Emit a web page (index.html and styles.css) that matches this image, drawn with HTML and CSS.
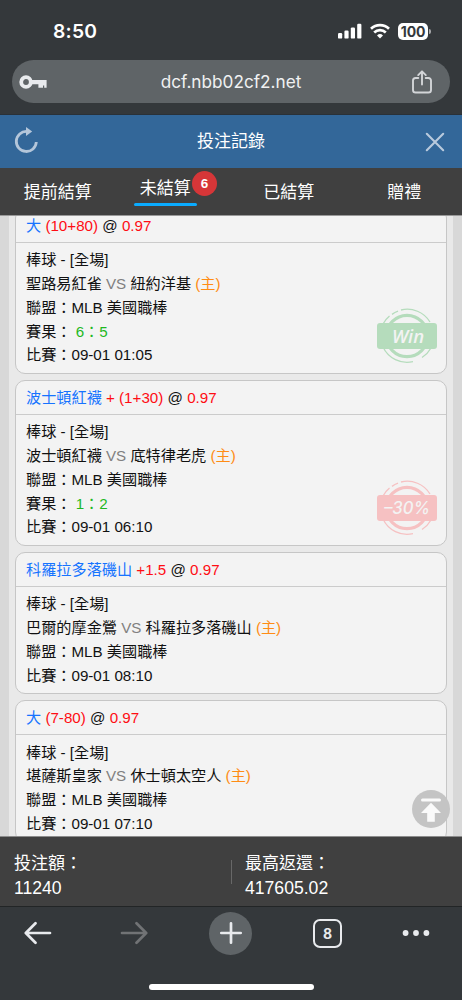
FILE: index.html
```html
<!DOCTYPE html>
<html lang="zh-TW">
<head>
<meta charset="utf-8">
<meta name="viewport" content="width=device-width, initial-scale=1">
<title>投注記錄</title>
<link rel="stylesheet" href="styles.css">
</head>
<body>
<div class="screen">
  <header class="browser-top">
    <div class="status">
      <span class="clock">8:50</span>
      <div class="status-icons">
        <svg class="signal" width="24" height="16" viewBox="0 0 24 16" fill="#fff"><rect x="0" y="10" width="4.2" height="5.6" rx="1.2"/><rect x="6.4" y="7.6" width="4.2" height="8" rx="1.2"/><rect x="12.8" y="4.4" width="4.2" height="11.2" rx="1.2"/><rect x="19.2" y=".8" width="4.2" height="14.8" rx="1.2"/></svg>
        <svg class="wifi" width="20" height="16" viewBox="0 0 20 16" fill="none" stroke="#fff" stroke-width="2.700"><path d="M1 5.700a13 13 0 0 1 18 0"/><path d="M4.200 9.400a8.400 8.400 0 0 1 11.600 0"/><path d="M10 15.500l-3-3a4.400 4.400 0 0 1 6 0z" fill="#fff" stroke="none"/></svg>
        <span class="battery">100</span><i class="battery-tip"></i>
      </div>
    </div>
    <div class="address">
      <svg width="28" height="16" viewBox="0 0 28 16"><circle cx="7" cy="8" r="4.8" fill="none" stroke="#e8eaed" stroke-width="3.8"/><path d="M12 6h15.600v7.800h-2.400v-2.300h-1.200v2.300h-4.600v-3.600H12z" fill="#e8eaed"/></svg>
      <span class="url">dcf.nbb02cf2.net</span>
      <svg width="22" height="26" viewBox="0 0 22 26" fill="none" stroke="#d3d5d8" stroke-width="1.9" stroke-linecap="round" stroke-linejoin="round"><path d="M7.300 9H4.600a2.600 2.600 0 0 0-2.600 2.600v9.300a2.600 2.600 0 0 0 2.600 2.600h12.800a2.600 2.600 0 0 0 2.600-2.600v-9.300A2.600 2.600 0 0 0 17.400 9h-2.700"/><path d="M11 15.500V2.500M7.200 6.100 11 2.300l3.800 3.800"/></svg>
    </div>
  </header>

  <div class="title-bar">
    <svg class="refresh" width="26" height="28" viewBox="0 0 26 28"><path d="M14 4.500a10 10 0 1 0 9.300 10.500" fill="none" stroke="#b4c6da" stroke-width="2.800"/><path d="M13 0v9l6.200-4.500z" fill="#b4c6da"/></svg>
    <h1 class="title">投注記錄</h1>
    <svg width="20" height="20" viewBox="0 0 20 20" stroke="#b9cadd" stroke-width="2.100" stroke-linecap="round"><path d="M1.800 1.800l16.400 16.400M18.200 1.800 1.800 18.200"/></svg>
  </div>

  <nav class="tabs">
    <span class="tab">提前結算</span>
    <span class="tab tab-active"><span class="tab-label">未結算</span><span class="badge">6</span></span>
    <span class="tab">已結算</span>
    <span class="tab">贈禮</span>
  </nav>

  <main class="content">
    <div class="list">
      <article class="card">
        <div class="card-head"><span class="pick">大</span> <span class="odds">(10+80)</span> @ <span class="odds">0.97</span></div>
        <div class="card-body">
          <p>棒球 - [全場]</p>
          <p>聖路易紅雀 <span class="vs">VS</span> 紐約洋基 <span class="home">(主)</span></p>
          <p>聯盟：MLB 美國職棒</p>
          <p>賽果： <span class="score">6：5</span></p>
          <p>比賽：09-01 01:05</p>
        </div>
        <div class="stamp win">
          <svg width="60" height="56" viewBox="0 0 60 56" fill="none" stroke="currentColor"><circle cx="30" cy="28" r="20.700" stroke-width="3.200"/><path d="M24 2a26.500 26.500 0 0 1 29 12M15 6.400a26.500 26.500 0 0 1 6-3.200M6 16A26.500 26.500 0 0 1 12.500 8M6 39A26.500 26.500 0 0 0 36 53.600M54 40A26.500 26.500 0 0 1 45 49.500" stroke-width="1.300"/></svg>
          <span class="stamp-text">Win</span>
        </div>
      </article>
      <article class="card">
        <div class="card-head"><span class="pick">波士頓紅襪</span> <span class="odds">+ (1+30)</span> @ <span class="odds">0.97</span></div>
        <div class="card-body">
          <p>棒球 - [全場]</p>
          <p>波士頓紅襪 <span class="vs">VS</span> 底特律老虎 <span class="home">(主)</span></p>
          <p>聯盟：MLB 美國職棒</p>
          <p>賽果： <span class="score">1：2</span></p>
          <p>比賽：09-01 06:10</p>
        </div>
        <div class="stamp loss">
          <svg width="60" height="56" viewBox="0 0 60 56" fill="none" stroke="currentColor"><circle cx="30" cy="28" r="20.700" stroke-width="3.200"/><path d="M24 2a26.500 26.500 0 0 1 29 12M15 6.400a26.500 26.500 0 0 1 6-3.200M6 16A26.500 26.500 0 0 1 12.500 8M6 39A26.500 26.500 0 0 0 36 53.600M54 40A26.500 26.500 0 0 1 45 49.500" stroke-width="1.300"/></svg>
          <span class="stamp-text">–30%</span>
        </div>
      </article>
      <article class="card">
        <div class="card-head"><span class="pick">科羅拉多落磯山</span> <span class="odds">+1.5</span> @ <span class="odds">0.97</span></div>
        <div class="card-body">
          <p>棒球 - [全場]</p>
          <p>巴爾的摩金鶯 <span class="vs">VS</span> 科羅拉多落磯山 <span class="home">(主)</span></p>
          <p>聯盟：MLB 美國職棒</p>
          <p>比賽：09-01 08:10</p>
        </div>
      </article>
      <article class="card">
        <div class="card-head"><span class="pick">大</span> <span class="odds">(7-80)</span> @ <span class="odds">0.97</span></div>
        <div class="card-body">
          <p>棒球 - [全場]</p>
          <p>堪薩斯皇家 <span class="vs">VS</span> 休士頓太空人 <span class="home">(主)</span></p>
          <p>聯盟：MLB 美國職棒</p>
          <p>比賽：09-01 07:10</p>
        </div>
      </article>
    </div>
    <div class="to-top">
      <svg width="38" height="38" viewBox="0 0 38 38" fill="#fafafa"><rect x="9" y="8.600" width="20" height="3" rx="1.500"/><path d="M19 12.800 29 23h-6.200v8.700h-7.600V23H9z"/></svg>
    </div>
  </main>

  <section class="summary">
    <div class="sum-item"><span>投注額：</span><span class="amount">11240</span></div>
    <div class="divider"></div>
    <div class="sum-item"><span>最高返還：</span><span class="amount">417605.02</span></div>
  </section>

  <footer class="browser-bottom">
    <div class="toolbar">
      <svg width="28" height="24" viewBox="0 0 28 24" fill="none" stroke="#e8eaed" stroke-width="2.700" stroke-linecap="round" stroke-linejoin="round"><path d="M26 12H2M11.500 2.300 1.800 12l9.700 9.700"/></svg>
      <svg width="28" height="24" viewBox="0 0 28 24" fill="none" stroke="#717375" stroke-width="2.700" stroke-linecap="round" stroke-linejoin="round"><path d="M2 12h24M16.500 2.300 26.200 12l-9.700 9.700"/></svg>
      <span class="plus"><svg width="24" height="24" viewBox="0 0 24 24" stroke="#e8eaed" stroke-width="2.700" stroke-linecap="round"><path d="M12 2.300v19.400M2.300 12h19.400"/></svg></span>
      <span class="tab-count">8</span>
      <svg width="28" height="8" viewBox="0 0 28 8" fill="#e8eaed"><circle cx="3.600" cy="4" r="2.900"/><circle cx="14" cy="4" r="2.900"/><circle cx="24.400" cy="4" r="2.900"/></svg>
    </div>
    <div class="home-indicator"></div>
  </footer>
</div>
</body>
</html>
```
FILE: styles.css
```css
* { box-sizing: border-box; }
body { margin: 0; }
.screen {
  display: flex;
  flex-direction: column;
  width: 462px;
  height: 1000px;
  overflow: hidden;
  font-family: "Liberation Sans", "Noto Sans CJK TC", sans-serif;
  background: #34383b;
}
.browser-top { height: 115px; flex: none; border-bottom: 1px solid #2a3138; }
.status {
  display: flex;
  justify-content: space-between;
  align-items: center;
  height: 60px;
  padding: 2px 31px 0 53px;
}
.clock { font: 600 19.300px/24px Inter, sans-serif; letter-spacing: .2px; color: #fff; }
.status-icons { display: flex; align-items: center; }
.wifi { margin: 0 8px; }
.battery {
  width: 30px;
  height: 17px;
  border-radius: 5px;
  background: #fff;
  color: #34383b;
  font: 700 14px/17px Inter, sans-serif;
  letter-spacing: -.2px;
  text-align: center;
}
.battery-tip { width: 2px; height: 5px; margin-left: 1px; border-radius: 0 2px 2px 0; background: #a5a7a9; }
.address {
  display: flex;
  align-items: center;
  justify-content: space-between;
  height: 43px;
  margin: 0 12px;
  padding: 0 17px 0 7px;
  border-radius: 22px;
  background: #5f6467;
}
.url { margin-left: 4px; font: 400 17.200px/24px Inter, sans-serif; color: #f0f1f2; }
.title-bar {
  display: flex;
  align-items: center;
  justify-content: space-between;
  flex: none;
  height: 53px;
  padding: 0 17px 0 13px;
  background: #336799;
}
.refresh { margin-bottom: 2px; }
.title { margin: 0 2px 0 0; font-size: 17px; font-weight: 400; line-height: 24px; color: #fff; }
.tabs {
  display: grid;
  grid-template-columns: repeat(4, 1fr);
  flex: none;
  height: 47px;
  background: #404040;
  color: #fff;
  font-size: 17px;
  line-height: 24px;
}
.tab { position: relative; padding-top: 13px; text-align: center; }
.tab-active { display: flex; justify-content: center; padding-top: 9px; padding-right: 16px; }
.tab-label { height: 29px; padding: 0 6px; }
.tab-label::after {
  content: "";
  display: block;
  height: 3px;
  margin: 2px -6px 0;
  border-radius: 2px;
  background: #0aabff;
}
.badge {
  position: absolute;
  top: 3px;
  right: 14px;
  width: 25px;
  height: 25px;
  border-radius: 50%;
  background: #d63638;
  font-size: 13.500px;
  font-weight: 700;
  line-height: 25px;
}
.content {
  position: relative;
  flex: none;
  height: 622px;
  padding: 0 9px;
  overflow: hidden;
  background: #d8d8d8;
  border-top: 1px solid #999;
  border-bottom: 1px solid #8c8c8c;
}
.list {
  display: flex;
  flex-direction: column;
  gap: 6.250px;
  margin-top: -8px;
  padding: 0 6px;
  background: #e9e9e9;
}
.card {
  position: relative;
  flex: none;
  border: 1px solid #c6c6c6;
  border-radius: 10px;
  background: #f3f3f3;
  color: #111;
  font-size: 15.170px;
}
.card-head { height: 34px; padding: 0 10px; border-bottom: 1px solid #cbcbcb; line-height: 33px; white-space: pre; }
.card-body { padding: 5.300px 10px 5.700px; }
.card-body p { height: 23.750px; margin: 0; line-height: 23.750px; white-space: pre; }
.pick { color: #1673ff; }
.odds { color: #ff0d14; }
.vs { color: #808080; }
.home { color: #ff8c14; }
.score { color: #1fb81f; }
.stamp { position: absolute; right: 9px; bottom: 9px; width: 60px; height: 56px; }
.stamp svg { display: block; }
.stamp-text {
  position: absolute;
  top: 15px;
  left: 0;
  width: 60px;
  height: 26px;
  border-radius: 3px;
  color: #f3f3f3;
  text-align: center;
}
.win { color: #b5dcbc; }
.win .stamp-text { background: #b5dcbc; padding-left: 2px; font: italic 600 18.500px/26px "Open Sans", sans-serif; }
.loss { color: #f6c1c2; }
.loss .stamp-text { background: #f6c1c2; font: italic 500 16.700px/26px Inter, sans-serif; }
.to-top { position: absolute; top: 574px; right: 12px; width: 38px; height: 38px; border-radius: 50%; background: #c4c4c4; }
.to-top svg { display: block; }
.summary {
  display: flex;
  flex: none;
  height: 70px;
  padding-left: 14px;
  background: #404040;
  border-bottom: 1px solid #222526;
  color: #fff;
  font-size: 17px;
}
.sum-item { display: flex; flex-direction: column; padding-top: 15px; line-height: 24px; }
.sum-item:first-child { width: 217px; }
.amount { font-size: 17.600px; }
.divider { width: 1px; height: 24px; margin: 23px 13px 0 0; background: #686868; }
.browser-bottom { flex: 1; }
.toolbar {
  display: grid;
  grid-template-columns: 75px 118px 75px 119px 57px;
  place-items: center;
  height: 52px;
}
.plus { display: grid; place-items: center; width: 43px; height: 43px; border-radius: 50%; background: #5f6467; }
.tab-count {
  width: 29px;
  height: 29px;
  border: 2px solid #e8eaed;
  border-radius: 7px;
  color: #e8eaed;
  font: 700 14px/25px Inter, sans-serif;
  text-align: center;
}
.home-indicator { width: 165px; height: 6px; margin: 25px auto 0; border-radius: 3px; background: #fff; }
```
